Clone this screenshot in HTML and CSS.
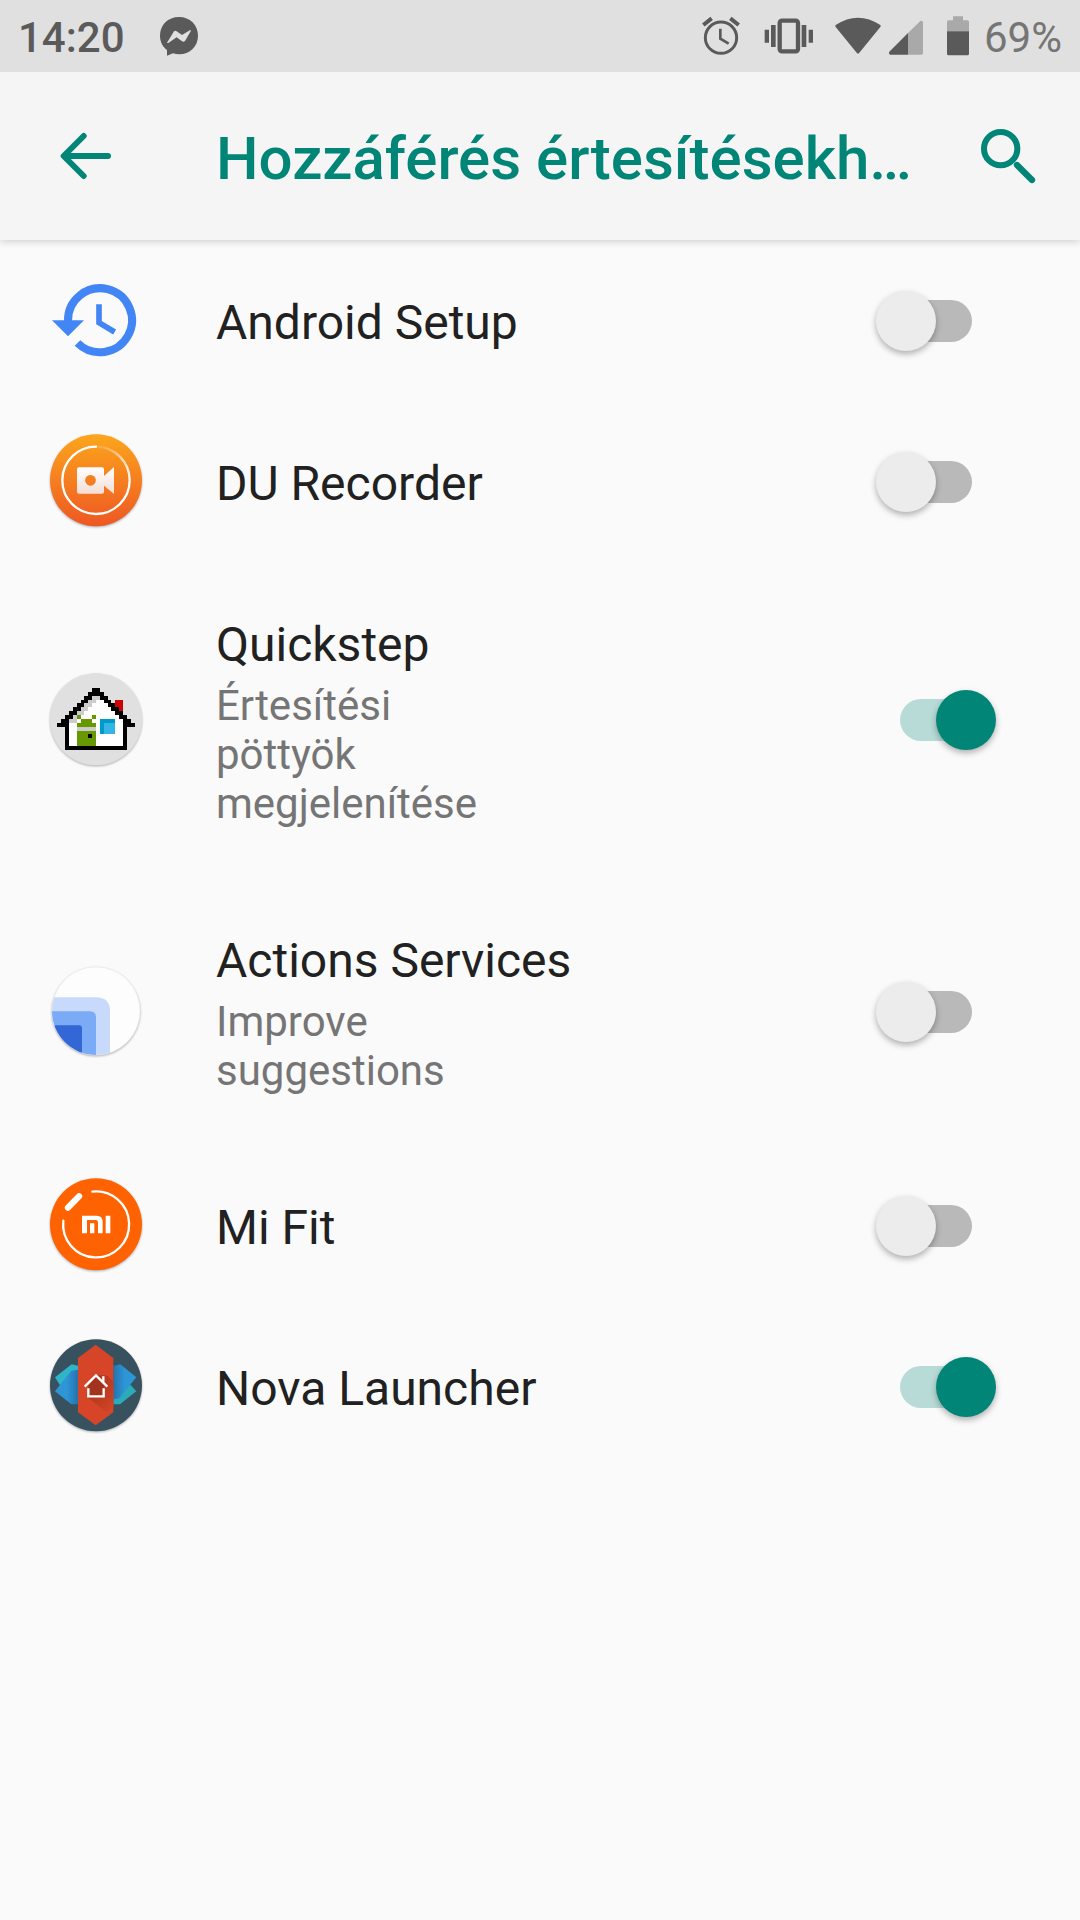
FILE: index.html
```html
<!DOCTYPE html>
<html lang="hu">
<head>
<meta charset="utf-8">
<meta name="viewport" content="width=device-width, initial-scale=1">
<title>Hozzáférés értesítésekhez</title>
<link rel="stylesheet" href="styles.css">
</head>
<body>
<div class="status">
  <span class="clock">14:20</span>
  <svg class="messenger" width="40" height="40" viewBox="477 48 120 120" aria-hidden="true">
    <path fill="#5a5a5a" d="M537 51C504 51 480 75 480 107C480 125 488 140 501 150V167L519 160Q528 163 537 163C570 163 594 139 594 107C594 75 570 51 537 51Z"/>
    <path fill="#e0e0e0" d="M501 128L522 94Q526 91 530 94L546 105L571 90Q574 91 572 94L555 123Q551 127 546 124L530 112L506 128Q502 130 501 128Z"/>
  </svg>
  <div class="indicators">
    <svg class="alarm" width="38" height="40" viewBox="68 49 114 120" fill="none" stroke="#5a5a5a" aria-hidden="true">
      <circle cx="125" cy="114" r="47" stroke-width="9"/>
      <path stroke-width="8" d="M123 87V117L148 132"/>
      <path stroke-width="12" d="M72 76L97 56M178 76L153 56"/>
    </svg>
    <svg class="vibrate" width="50" height="40" viewBox="254 49 150 120" aria-hidden="true">
      <rect x="301" y="63" width="55" height="92" rx="7" fill="none" stroke="#5a5a5a" stroke-width="13"/>
      <path fill="#5a5a5a" d="M256 90h13v39h-13zM275 76h14v66h-14zM367 76h14v66h-14zM388 90h13v39h-13z"/>
    </svg>
    <svg class="wifi" width="48" height="40" viewBox="461 46 144 120" aria-hidden="true">
      <path fill="#5a5a5a" d="M466 73Q533 29 600 73Q602 76 600 79L537 156Q533 161 529 156L466 79Q464 76 466 73Z"/>
    </svg>
    <svg class="signal" width="36" height="40" viewBox="624 46 108 120" aria-hidden="true">
      <path fill="#a9a9a9" d="M684 97L721 61Q728 58 729 65V157Q729 162 724 162H684Z"/>
      <path fill="#5a5a5a" d="M684 97V162H631Q625 160 628 153Z"/>
    </svg>
    <svg class="battery" width="24" height="40" viewBox="798 47 72 120" aria-hidden="true">
      <path fill="#a9a9a9" d="M819 48H849V60H862Q867 60 867 65V93H801V65Q801 60 806 60H819Z"/>
      <path fill="#5a5a5a" d="M801 93H867V160Q867 165 862 165H806Q801 165 801 160Z"/>
    </svg>
    <span class="percent">69%</span>
  </div>
</div>

<header class="toolbar">
  <button class="tool back" type="button" aria-label="Vissza">
    <svg width="52" height="48" viewBox="180 396 156 144" fill="none" stroke="#008577" stroke-width="18" stroke-linecap="round" stroke-linejoin="round">
      <path d="M324 468H192M251 408L191 468L251 528"/>
    </svg>
  </button>
  <h1>Hozzáférés értesítésekhez</h1>
  <button class="tool search" type="button" aria-label="Keresés">
    <svg width="56" height="56" viewBox="900 384 168 168" fill="none" stroke="#008577">
      <circle cx="962" cy="446" r="50" stroke-width="18"/>
      <path stroke-width="19" stroke-linecap="round" d="M1011 495L1056 540"/>
    </svg>
  </button>
</header>

<main class="list">
  <label class="row">
    <svg class="icon" viewBox="24 8 288 288" aria-hidden="true">
      <path fill="none" stroke="#4285f4" stroke-width="24" d="M84 152A96 96 0 1 1 112.500 218"/>
      <path fill="#4285f4" d="M36 150H132L84 198Z"/>
      <path fill="none" stroke="#4285f4" stroke-width="17" d="M177 102V157L224 185"/>
    </svg>
    <span class="text"><span class="name">Android Setup</span></span>
    <input class="switch" type="checkbox" role="switch">
  </label>

  <label class="row">
    <svg class="icon shadow" viewBox="24 26 288 288" aria-hidden="true">
      <defs>
        <linearGradient id="du" x1="0" y1="0" x2="0" y2="1"><stop offset="0" stop-color="#fca61c"/><stop offset="1" stop-color="#ee5723"/></linearGradient>
        <linearGradient id="duRing" x1="0" y1="0" x2="1" y2="1"><stop offset="0" stop-color="#fff" stop-opacity=".1"/><stop offset="1" stop-color="#fff"/></linearGradient>
        <linearGradient id="cam" x1="0" y1="0" x2="0" y2="1"><stop offset="0" stop-color="#fff"/><stop offset="1" stop-color="#f3ddd6"/></linearGradient>
      </defs>
      <circle cx="168" cy="165" r="138" fill="url(#du)"/>
      <path fill="none" stroke="#fff" stroke-width="7" d="M269 165A101 101 0 1 1 171 64"/>
      <path fill="none" stroke="url(#duRing)" stroke-width="7" d="M171 64A101 101 0 0 1 269 165"/>
      <path fill="url(#cam)" fill-rule="evenodd" d="M117 126H186Q192 126 192 132V152L222 125V206L192 181V199Q192 205 186 205H117Q111 205 111 199V132Q111 126 117 126ZM151 149a16 16 0 1 0 1 0Z"/>
    </svg>
    <span class="text"><span class="name">DU Recorder</span></span>
    <input class="switch" type="checkbox" role="switch">
  </label>

  <label class="row">
    <svg class="icon shadow" viewBox="24 36 288 288" aria-hidden="true">
      <circle cx="168" cy="178" r="138" fill="#e0e0e0"/>
      <g transform="translate(52 84) scale(11.6)" shape-rendering="crispEdges">
        <path fill="#c00" d="M15 3h2v4h-2z"/>
        <path fill="#fff" d="M9 2h2v1h1v1h1v1h1v1h1v1h1v1h1v7H3V8h1V7h1V6h1V5h1V4h1V3h1z"/>
        <path fill="#ccc" d="M9 2h2v1h-1v1H9v1H8v1H7v1H6v1H5v1H3V8h1V7h1V6h1V5h1V4h1V3h1z"/>
        <path fill-rule="evenodd" d="M9 0h2v1h1v1h1v1h1v1h1v1h1v1h1v1h1v1h1v1h1v1h-2v6H2v-6H0V9h1V8h1V7h1V6h1V5h1V4h1V3h1V2h1V1h1zM9 2v1H8v1H7v1H6v1H5v1H4v1H3v7h14V8h-1V7h-1V6h-1V5h-1V4h-1V3h-1V2z"/>
        <path fill="#690" d="M5 7h1v1h3V7h1v1H9v1h1v6H5V9h1V8H5z"/>
        <path fill="#ccc" d="M5 10h5v1H5z"/>
        <path d="M8 12h1v1H8z"/>
        <path fill="#09c" d="M11 8h4v4h-4z"/>
        <path fill="#33b5e5" d="M12 9h3v3h-3z"/>
      </g>
    </svg>
    <span class="text"><span class="name">Quickstep</span><span class="note">Értesítési pöttyök megjelenítése</span></span>
    <input class="switch" type="checkbox" role="switch" checked>
  </label>

  <label class="row">
    <svg class="icon shadow" viewBox="24 26 288 288" aria-hidden="true">
      <defs>
        <clipPath id="disc"><circle cx="168" cy="167" r="132"/></clipPath>
      </defs>
      <circle cx="168" cy="167" r="132" fill="#fdfdfd" stroke="#ededed" stroke-width="2"/>
      <g clip-path="url(#disc)">
        <path fill="#c8dafc" d="M30 126H168Q210 126 210 168V310H30Z"/>
        <path fill="#7baaf7" d="M30 168H150Q168 168 168 186V310H30Z"/>
        <path fill="#3367d6" d="M30 210H118Q126 210 126 218V310H30Z"/>
      </g>
    </svg>
    <span class="text"><span class="name">Actions Services</span><span class="note">Improve suggestions</span></span>
    <input class="switch" type="checkbox" role="switch">
  </label>

  <label class="row">
    <svg class="icon shadow" viewBox="24 38 288 288" aria-hidden="true">
      <circle cx="168" cy="177" r="138" fill="#ff6200"/>
      <path fill="none" stroke="#fff" stroke-width="7" stroke-linecap="round" d="M157 79A99 99 0 1 1 70 166"/>
      <path stroke="#fff" stroke-width="19" stroke-linecap="round" d="M84 127L117 93"/>
      <path fill="#fff" d="M126 151H170Q188 151 188 169V204H174V171Q174 164 167 164H141V204H126ZM150 174H163V204H150ZM197 151H211V204H197Z"/>
    </svg>
    <span class="text"><span class="name">Mi Fit</span></span>
    <input class="switch" type="checkbox" role="switch">
  </label>

  <label class="row">
    <svg class="icon shadow" viewBox="24 41 288 288" aria-hidden="true">
      <defs>
        <linearGradient id="novaL" x1="0" y1="0" x2="1" y2="0"><stop offset=".5" stop-color="#2e96d6"/><stop offset="1" stop-color="#2473ad"/></linearGradient>
        <linearGradient id="novaR" x1="1" y1="0" x2="0" y2="0"><stop offset=".5" stop-color="#2e96d6"/><stop offset="1" stop-color="#2473ad"/></linearGradient>
        <linearGradient id="fall" x1="0" y1="0" x2="1" y2="1"><stop offset="0" stop-color="#9f321c"/><stop offset="1" stop-color="#d64527"/></linearGradient>
      </defs>
      <circle cx="168" cy="180" r="138" fill="#37515e"/>
      <path fill="#30b4c8" d="M45 156L95 117L114 121V170L61 181Z"/>
      <path fill="url(#novaL)" d="M45 198L93 137L114 133V237H94Z"/>
      <path fill="#2baab9" d="M220 190L272 179L289 198L240 237H220Z"/>
      <path fill="url(#novaR)" d="M220 121L241 117L289 156L238 219L220 222Z"/>
      <path fill="#d64527" d="M167 58L220 98V261L167 300L114 261V98Z"/>
      <path fill="url(#fall)" d="M203 152L220 169V246L201 261L144 217V187L168 150H193Z"/>
      <path fill="#a2341f" d="M145 180L168 156L192 180V213H145Z"/>
      <path fill="none" stroke="#fff" stroke-width="7" d="M134 184L168 150L202 184M190 169V153M145 189V213H191V189"/>
    </svg>
    <span class="text"><span class="name">Nova Launcher</span></span>
    <input class="switch" type="checkbox" role="switch" checked>
  </label>
</main>
</body>
</html>
```

FILE: styles.css
```css
* {
  box-sizing: border-box;
}

body {
  margin: 0;
  min-height: 100vh;
  background: #fafafa;
  color: #212121;
  font-family: Roboto, "Noto Sans", sans-serif;
}

svg {
  display: block;
  flex: none;
}

.status {
  display: flex;
  align-items: center;
  position: relative;
  z-index: 1;
  height: 72px;
  padding: 0 18px;
  background: #e0e0e0;
  font-size: 42px;
  line-height: 48px;
}

.clock {
  padding-top: 3px;
  color: #5a5a5a;
  font-weight: 500;
}

.messenger {
  margin-left: 34px;
}

.indicators {
  display: flex;
  align-items: center;
  margin-left: auto;
}

.vibrate {
  margin-left: 24px;
}

.wifi {
  margin-left: 20px;
}

.signal {
  margin-left: 6px;
}

.battery {
  margin-left: 22px;
}

.percent {
  margin-left: 14px;
  padding-top: 3px;
  color: #757575;
}

.toolbar {
  display: flex;
  align-items: center;
  height: 168px;
  padding: 0 44px 0 60px;
  background: #f5f5f5;
  box-shadow: 0 1px 8px rgba(0, 0, 0, .2);
}

.tool {
  flex: none;
  padding: 0;
  border: 0;
  background: none;
  cursor: pointer;
}

.back {
  width: 156px;
}

.toolbar h1 {
  flex: 1;
  min-width: 0;
  margin: 0;
  padding-top: 6px;
  overflow: hidden;
  color: #008577;
  font-size: 60px;
  font-weight: 500;
  line-height: 72px;
  text-overflow: ellipsis;
  white-space: nowrap;
}

.search {
  margin-left: 64px;
}

.row {
  display: flex;
  align-items: center;
  min-height: 161px;
  padding: 50px 84px 50px 48px;
}

.icon {
  width: 96px;
  height: 96px;
  margin: -20px 72px -20px 0;
  overflow: visible;
}

.shadow {
  filter: drop-shadow(0 1px 1px rgba(0, 0, 0, .3));
}

.text {
  display: flex;
  flex: 1;
  flex-direction: column;
  gap: 8px;
  padding-top: 4px;
}

.name {
  font-size: 48px;
  line-height: 57px;
}

.note {
  max-width: 280px;
  color: #757575;
  font-size: 42px;
  line-height: 49px;
}

.switch {
  display: flex;
  flex: none;
  align-items: center;
  position: relative;
  width: 120px;
  height: 60px;
  margin: 0;
  appearance: none;
  cursor: pointer;
}

.switch::before {
  content: "";
  width: 72px;
  height: 42px;
  margin: 0 auto;
  border-radius: 21px;
  background: #b9b9b9;
}

.switch::after {
  content: "";
  position: absolute;
  top: 0;
  left: 0;
  width: 60px;
  height: 60px;
  border-radius: 50%;
  background: #ececec;
  box-shadow: 0 3px 6px rgba(0, 0, 0, .3);
}

.switch:checked::before {
  background: #b8dbd7;
}

.switch:checked::after {
  right: 0;
  left: auto;
  background: #008577;
}
```
